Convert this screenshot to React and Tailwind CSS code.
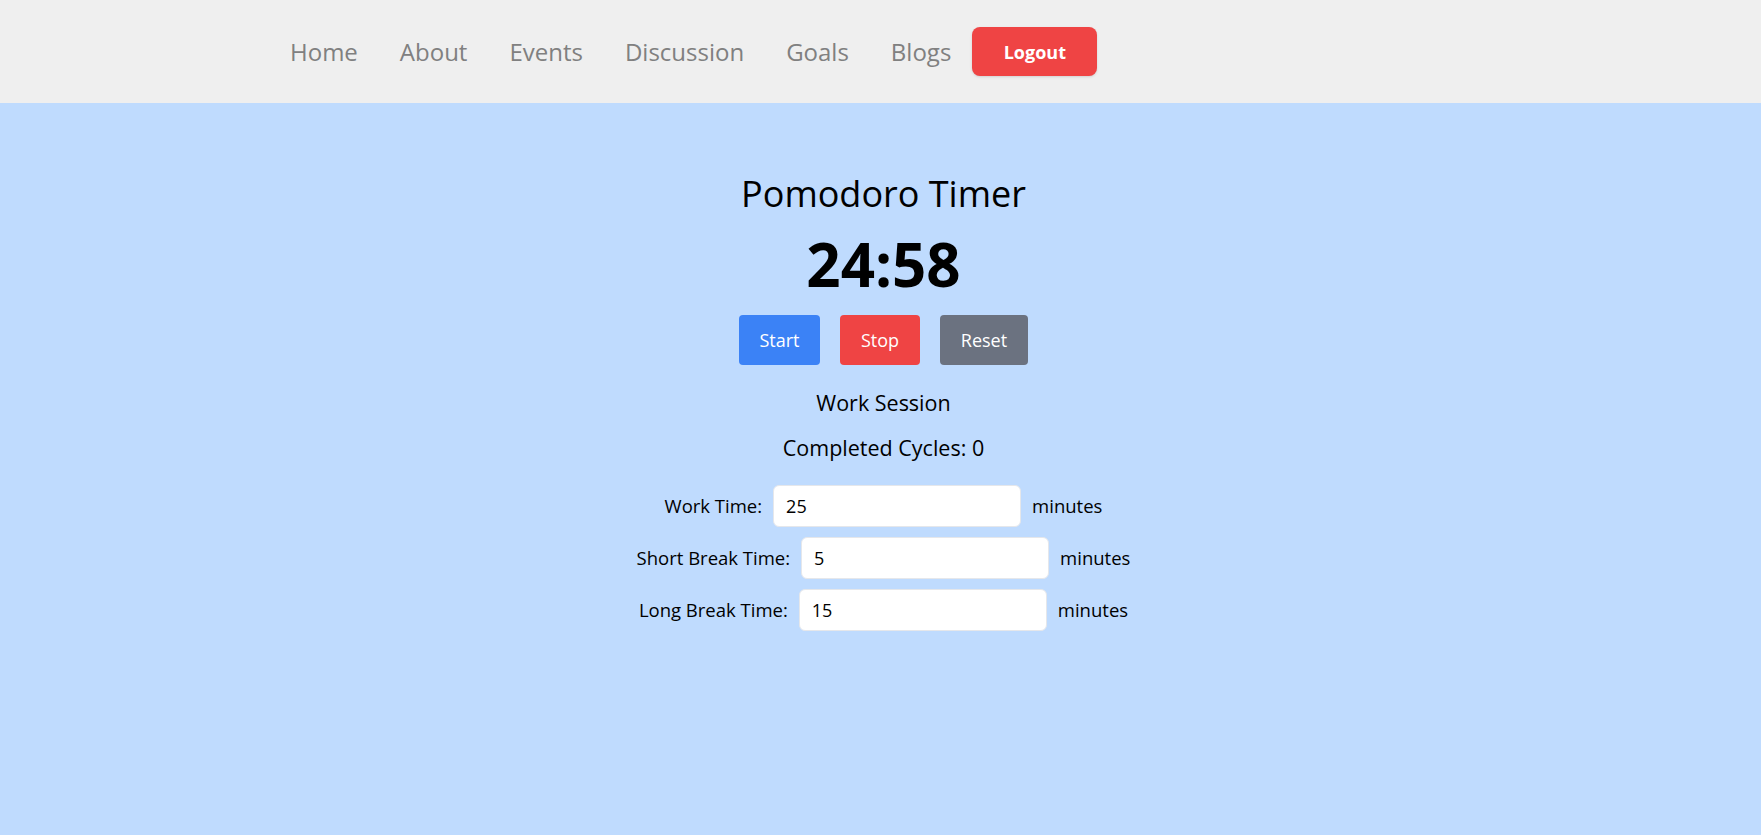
import { useState } from 'react';

const navLinks = ['Home', 'About', 'Events', 'Discussion', 'Goals', 'Blogs'];

function formatTime(seconds) {
  const m = String(Math.floor(seconds / 60)).padStart(2, '0');
  const s = String(seconds % 60).padStart(2, '0');
  return `${m}:${s}`;
}

export default function App() {
  const [timeLeft] = useState(24 * 60 + 58);
  const [workTime, setWorkTime] = useState('25');
  const [shortBreak, setShortBreak] = useState('5');
  const [longBreak, setLongBreak] = useState('15');

  const settings = [
    { label: 'Work Time:', value: workTime, onChange: setWorkTime },
    { label: 'Short Break Time:', value: shortBreak, onChange: setShortBreak },
    { label: 'Long Break Time:', value: longBreak, onChange: setLongBreak },
  ];

  return (
    <div className="min-h-screen flex flex-col bg-[#bfdbfe] font-['Open_Sans',sans-serif]">
      {/* Navbar */}
      <nav className="h-[103px] bg-[#efefef] flex items-center pl-[269px]">
        <ul className="flex items-center">
          {navLinks.map((link) => (
            <li key={link}>
              <a href="#" className="block px-[21px] text-2xl text-[#808080] leading-8">
                {link}
              </a>
            </li>
          ))}
          <li>
            <button className="h-[49px] w-[125px] rounded-lg bg-[#ef4444] text-white text-lg font-bold shadow-sm">
              Logout
            </button>
          </li>
        </ul>
      </nav>

      {/* Timer */}
      <main className="flex-1 flex flex-col items-center pt-[71px] pl-[6px] text-black">
        <h1 className="text-4xl font-medium leading-10 mb-5">Pomodoro Timer</h1>
        <div className="text-6xl font-bold leading-none mb-[21px]">{formatTime(timeLeft)}</div>

        <div className="flex gap-5">
          <button className="h-[50px] w-[81px] rounded bg-[#3b82f6] text-white text-lg">Start</button>
          <button className="h-[50px] w-[80px] rounded bg-[#ef4444] text-white text-lg">Stop</button>
          <button className="h-[50px] w-[88px] rounded bg-[#6b7280] text-white text-lg">Reset</button>
        </div>

        <p className="mt-6 text-[21.5px] leading-7">Work Session</p>
        <p className="mt-[17px] text-[21.5px] leading-7">Completed Cycles: 0</p>

        <div className="mt-[23px] flex flex-col items-center gap-[10px]">
          {settings.map((s) => (
            <label key={s.label} className="flex items-center gap-[11px] text-[18.5px]">
              <span>{s.label}</span>
              <input
                type="number"
                value={s.value}
                onChange={(e) => s.onChange(e.target.value)}
                className="w-[248px] h-[42px] px-3 bg-white border border-gray-200 rounded-md text-lg outline-none [appearance:textfield]"
              />
              <span>minutes</span>
            </label>
          ))}
        </div>
      </main>
    </div>
  );
}
